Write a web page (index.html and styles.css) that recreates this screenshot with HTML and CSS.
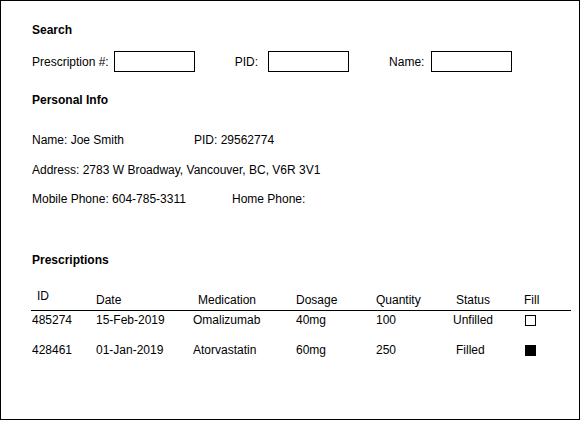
FILE: index.html
```html
<!DOCTYPE html>
<html>
<head>
<meta charset="utf-8">
<link rel="stylesheet" href="styles.css">
</head>
<body>
<div class="frame">
  <div class="heading h-search">Search</div>
  <div class="search-row">
    <div class="field"><span class="label l1">Prescription #:</span><span class="box"></span></div>
    <div class="field"><span class="label l2">PID:</span><span class="box"></span></div>
    <div class="field"><span class="label l3">Name:</span><span class="box"></span></div>
  </div>
  <div class="heading h-info">Personal Info</div>
  <div class="info-line first"><span class="c-name">Name: Joe Smith</span><span>PID: 29562774</span></div>
  <div class="info-line addr">Address: 2783 W Broadway, Vancouver, BC, V6R 3V1</div>
  <div class="info-line mobile"><span class="c-mobile">Mobile Phone: 604-785-3311</span><span>Home Phone:</span></div>
  <div class="heading h-presc">Prescriptions</div>
  <div class="table">
    <div class="trow thead">
      <div class="cell id-h">ID</div>
      <div class="cell">Date</div>
      <div class="cell pad5">Medication</div>
      <div class="cell">Dosage</div>
      <div class="cell">Quantity</div>
      <div class="cell pad3">Status</div>
      <div class="cell">Fill</div>
    </div>
    <div class="trow tbody r1">
      <div class="cell">485274</div>
      <div class="cell">15-Feb-2019</div>
      <div class="cell">Omalizumab</div>
      <div class="cell">40mg</div>
      <div class="cell">100</div>
      <div class="cell">Unfilled</div>
      <div class="cell chk-cell"><span class="chk"></span></div>
    </div>
    <div class="trow tbody r2">
      <div class="cell">428461</div>
      <div class="cell">01-Jan-2019</div>
      <div class="cell">Atorvastatin</div>
      <div class="cell">60mg</div>
      <div class="cell">250</div>
      <div class="cell pad3">Filled</div>
      <div class="cell chk-cell"><span class="chk on"></span></div>
    </div>
  </div>
</div>
</body>
</html>
```

FILE: styles.css
```css
html, body {
  margin: 0;
  padding: 0;
  background: #fff;
}
body {
  font-family: "Liberation Sans", Arial, sans-serif;
  font-size: 12px;
  line-height: 14px;
  color: #000;
}
.frame {
  box-sizing: border-box;
  width: 580px;
  height: 420px;
  border: 1px solid #000;
  padding: 22px 0 0 31px;
}
.heading {
  font-weight: bold;
}
.search-row {
  display: flex;
  gap: 40px;
  margin-top: 14px;
}
.field {
  display: flex;
  align-items: center;
}
.label.l1 { margin-right: 5px; }
.label.l2 { margin-right: 10px; }
.label.l3 { margin-right: 7px; }
.box {
  box-sizing: border-box;
  width: 81px;
  height: 21px;
  border: 1px solid #000;
}
.h-info { margin-top: 21px; }
.info-line { display: flex; }
.info-line.first { margin-top: 26px; }
.info-line.addr { margin-top: 16px; }
.info-line.mobile { margin-top: 15px; }
.c-name { width: 162px; }
.c-mobile { width: 200px; }
.h-presc { margin-top: 47px; }
.table {
  margin-top: 22px;
  width: 540px;
  margin-left: -1px;
}
.trow {
  display: grid;
  grid-template-columns: 64px 97px 103px 80px 77px 71px 1fr;
  padding-left: 1px;
}
.thead {
  align-items: start;
  padding-bottom: 3px;
  border-bottom: 1px solid #000;
}
.thead .cell { margin-top: 4px; }
.thead .cell.id-h { margin-top: 0; padding-left: 5px; }
.pad5 { padding-left: 5px; }
.pad3 { padding-left: 3px; }
.tbody { align-items: center; }
.r1 { margin-top: 2px; }
.r2 { margin-top: 16px; }
.chk-cell {
  display: flex;
  align-items: center;
  padding-left: 1px;
}
.chk {
  box-sizing: border-box;
  width: 11px;
  height: 11px;
  border: 1px solid #000;
}
.chk.on { background: #000; }
```
